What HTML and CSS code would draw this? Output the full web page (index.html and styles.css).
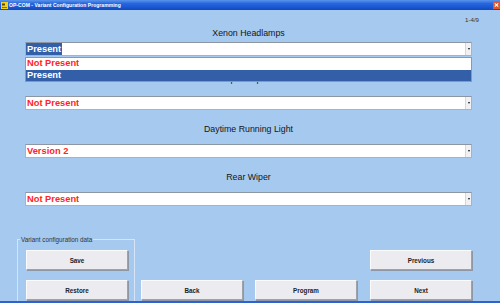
FILE: index.html
```html
<!DOCTYPE html>
<html>
<head>
<meta charset="utf-8">
<link rel="stylesheet" href="styles.css">
</head>
<body>
<div class="window">
  <div class="titlebar">
    <svg class="app-icon" width="7" height="7" viewBox="0 0 7 7">
      <rect x="0" y="0" width="7" height="7" fill="#f2d21a"/>
      <rect x="1" y="1.5" width="3" height="2" fill="#5a4a00"/>
      <rect x="1" y="5" width="5" height="1" fill="#8a7000"/>
    </svg>
    <span class="title">OP-COM - Variant Configuration Programming</span>
    <span class="close">
      <svg width="7" height="8" viewBox="0 0 7 8">
        <rect x="0" y="0" width="7" height="8" fill="#e2582e"/>
        <path d="M1.8 2.3 L5.2 5.7 M5.2 2.3 L1.8 5.7" stroke="#fff" stroke-width="1.1"/>
      </svg>
    </span>
  </div>
  <div class="main">
    <div class="counter">1-4/9</div>
    <div class="fields">
      <div class="field field-open">
        <div class="label">Xenon Headlamps</div>
        <div class="combo">
          <span class="value value-selected">Present</span>
          <span class="arrow"></span>
          <ul class="listbox">
            <li class="option">Not Present</li>
            <li class="option option-selected">Present</li>
          </ul>
        </div>
      </div>
      <div class="field field-covered">
        <div class="label">Trip Computer</div>
        <div class="combo">
          <span class="value">Not Present</span>
          <span class="arrow"></span>
        </div>
      </div>
      <div class="field">
        <div class="label">Daytime Running Light</div>
        <div class="combo">
          <span class="value">Version 2</span>
          <span class="arrow"></span>
        </div>
      </div>
      <div class="field">
        <div class="label">Rear Wiper</div>
        <div class="combo">
          <span class="value">Not Present</span>
          <span class="arrow"></span>
        </div>
      </div>
    </div>
    <div class="actions">
      <div class="group">
        <span class="group-label">Variant configuration data</span>
        <button class="btn">Save</button>
        <button class="btn">Restore</button>
      </div>
      <div class="col col-back col-bottom"><button class="btn">Back</button></div>
      <div class="col col-program col-bottom"><button class="btn">Program</button></div>
      <div class="col col-nav">
        <button class="btn">Previous</button>
        <button class="btn">Next</button>
      </div>
    </div>
  </div>
</div>
</body>
</html>
```
FILE: styles.css
```css
* { box-sizing: border-box; }
html, body { margin: 0; padding: 0; }
body { width: 500px; height: 303px; overflow: hidden; font-family: "Liberation Sans", Arial, sans-serif; }

.window {
  width: 500px;
  height: 303px;
  display: flex;
  flex-direction: column;
  background: #a6c9ef;
  border-bottom: 2px solid #2f62cc;
}

.titlebar {
  height: 10px;
  flex: 0 0 10px;
  display: flex;
  align-items: center;
  background: linear-gradient(#5a95ec 0%, #2767dd 35%, #1b57d4 70%, #124ab9 100%);
  color: #fff;
}
.app-icon { margin-left: 1px; display: block; }
.title {
  margin-left: 1px;
  font-size: 5px;
  font-weight: bold;
  line-height: 10px;
  letter-spacing: 0.05px;
}
.close { margin-left: auto; display: flex; }
.close svg { display: block; }

.main {
  flex: 1;
  display: flex;
  flex-direction: column;
  overflow: hidden;
}

.counter {
  height: 8px;
  line-height: 8px;
  margin-top: 6px;
  padding-right: 21px;
  text-align: right;
  font-size: 6.1px;
  color: #333;
}

.fields {
  margin: 2px 28px 0 25px;
  display: flex;
  flex-direction: column;
  gap: 12px;
}
.field { display: flex; flex-direction: column; }
.field-open { margin-bottom: 6px; }
.label {
  height: 14px;
  line-height: 14px;
  margin-bottom: 8px;
  text-align: center;
  font-size: 8.8px;
  color: #151515;
}
.field-open .label { margin-bottom: 2px; }
.field-covered .label { margin-top: -2px; margin-bottom: 10px; }

.combo {
  position: relative;
  height: 14px;
  display: flex;
  align-items: center;
  background: #fff;
  border: 1px solid #a9b2bd;
  border-top-color: #8d96a2;
}
.value {
  padding-left: 1px;
  font-size: 9.3px;
  font-weight: bold;
  line-height: 12px;
  color: #ff2424;
}
.value-selected {
  background: #335fa9;
  color: #fff;
  padding: 0 1px;
}
.arrow {
  margin-left: auto;
  width: 6px;
  height: 12px;
  background: #f1f1f3;
  border-left: 1px solid #d4d8de;
  display: flex;
  align-items: center;
  justify-content: center;
}
.arrow::after {
  content: "";
  width: 0;
  height: 0;
  border-left: 1.5px solid transparent;
  border-right: 1.5px solid transparent;
  border-top: 2px solid #111;
}

.listbox {
  position: absolute;
  top: 14px;
  left: -1px;
  right: -1px;
  margin: 0;
  padding: 0;
  list-style: none;
  background: #fff;
  border: 1px solid #8e98a6;
  z-index: 2;
}
.option {
  height: 11.5px;
  line-height: 11.5px;
  padding-left: 1px;
  font-size: 9.3px;
  font-weight: bold;
  color: #ff2424;
}
.option-selected { background: #335fa9; color: #fff; }

.actions {
  margin-top: 33px;
  padding-left: 17px;
  display: flex;
  align-items: flex-start;
}
.group {
  position: relative;
  width: 118px;
  padding: 10px 6px 6px 8px;
  border: 1px solid #d6e4f6;
  display: flex;
  flex-direction: column;
  gap: 10px;
}
.group-label {
  position: absolute;
  top: -4px;
  left: 2px;
  padding: 0 1px;
  background: #a6c9ef;
  font-size: 6.3px;
  line-height: 7px;
  color: #333;
}
.col {
  display: flex;
  flex-direction: column;
  gap: 10px;
  padding-top: 11px;
}
.col-bottom { padding-top: 41px; }
.col-back { margin-left: 6px; }
.col-program { margin-left: 12px; }
.col-nav { margin-left: 13px; }

.btn {
  width: 102px;
  height: 20px;
  margin: 0;
  padding: 0;
  background: #ecebf0;
  border: 1px solid;
  border-color: #fbfbfd #9ea3aa #9ea3aa #fbfbfd;
  box-shadow: 1px 1px 0 #8d97a6;
  font-family: "Liberation Sans", Arial, sans-serif;
  font-size: 6.3px;
  font-weight: bold;
  color: #222;
}
```
